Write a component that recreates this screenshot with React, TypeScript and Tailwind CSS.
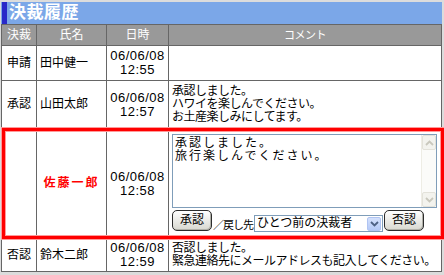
import React from 'react';

const FONT = "font-['Liberation_Sans','Noto_Sans_CJK_JP',sans-serif]";

type Row = {
  status: string;
  name: string;
  date: string;
  time: string;
  comment: string[];
  h: string;
};

const rows: Row[] = [
  { status: '申請', name: '田中健一', date: '06/06/08', time: '12:55', comment: [], h: 'h-[35px]' },
  {
    status: '承認',
    name: '山田太郎',
    date: '06/06/08',
    time: '12:57',
    comment: ['承認しました。', 'ハワイを楽しんでください。', 'お土産楽しみにしてます。'],
    h: 'h-[48px]',
  },
];

const GRID = 'grid grid-cols-[35px_70px_62px_273px] border-l border-[#666]';
const CELL = 'border-r border-b border-[#666] flex items-center';

function DateCell({ date, time }: { date: string; time: string }) {
  return (
    <div className={`${CELL} flex-col justify-center text-[13px] leading-[14px] tracking-[0.5px] text-center`}>
      <span>{date}</span>
      <span>{time}</span>
    </div>
  );
}

function Chevron({ color, up }: { color: string; up?: boolean }) {
  return (
    <svg width="9" height="6" viewBox="0 0 9 6">
      <path d={up ? 'M1 5 L4.5 1.5 L8 5' : 'M1 1 L4.5 4.5 L8 1'} fill="none" stroke={color} strokeWidth="1.8" />
    </svg>
  );
}

function XpButton({ label }: { label: string }) {
  return (
    <div className="h-[21px] w-[40px] rounded-[5px] border border-[#2c2c2c] bg-gradient-to-b from-white to-[#d8d8d0] shadow-[inset_-1px_-1px_0_#b0b0a8] flex items-center justify-center text-[12px]">
      {label}
    </div>
  );
}

export default function App() {
  return (
    <div className={`w-[444px] h-[275px] bg-[#dcdcdc] pt-[2px] pl-[1px] text-black ${FONT}`}>
      <div className="w-[441px]">
        {/* Title */}
        <div className="h-[22px] bg-[#7ba7e8] flex items-stretch">
          <div className="w-[5px] ml-px bg-[#2828c8]" />
          <span className="ml-[2px] text-white font-bold text-[17px] leading-[22px] tracking-[0.5px]">決裁履歴</span>
        </div>

        {/* Header */}
        <div className={`${GRID} border-t bg-[#999] text-white text-[12px] h-[22px]`}>
          <div className={`${CELL} justify-center`}>決裁</div>
          <div className={`${CELL} justify-center`}>氏名</div>
          <div className={`${CELL} justify-center`}>日時</div>
          <div className={`${CELL} justify-center text-[11px] tracking-[-0.5px]`}>コメント</div>
        </div>

        <div className="bg-white text-[12px] leading-[13px]">
          {rows.map((r) => (
            <div key={r.name} className={`${GRID} ${r.h}`}>
              <div className={`${CELL} justify-center`}>{r.status}</div>
              <div className={`${CELL} pl-[3px]`}>{r.name}</div>
              <DateCell date={r.date} time={r.time} />
              <div className={`${CELL} pl-[3px]`}>
                <div className="flex flex-col tracking-[-0.5px]">
                  {r.comment.map((c) => (
                    <span key={c}>{c}</span>
                  ))}
                </div>
              </div>
            </div>
          ))}

          {/* Current approver row */}
          <div className={`${GRID} h-[110px] relative`}>
            <div className={CELL} />
            <div className={`${CELL} justify-center text-[#ff0000] font-bold tracking-[2px]`}>佐藤一郎</div>
            <DateCell date="06/06/08" time="12:58" />
            <div className="border-r border-b border-[#666] flex flex-col pl-[3px] pt-[5px]">
              <div className="w-[265px] h-[74px] border border-[#7f9db9] bg-white flex">
                <div className="flex-1 pl-[2px] pt-[2px] text-[12px] leading-[13px] tracking-[2px]">
                  <div>承認しました。</div>
                  <div>旅行楽しんでください。</div>
                </div>
                <div className="w-[15px] flex flex-col bg-[#fbfbf9] border-l border-[#eeede5]">
                  <div className="h-[15px] border border-[#e3e2da] rounded-[2px] bg-[#f3f3ee] flex items-center justify-center">
                    <Chevron color="#c9c8bd" up />
                  </div>
                  <div className="flex-1" />
                  <div className="h-[15px] border border-[#e3e2da] rounded-[2px] bg-[#f3f3ee] flex items-center justify-center">
                    <Chevron color="#c9c8bd" />
                  </div>
                </div>
              </div>
              <div className="mt-[2px] flex items-end">
                <XpButton label="承認" />
                <span className="ml-px text-[11px] tracking-[-1px] leading-[14px] mb-[-1px]">／戻し先</span>
                <div className="ml-px mb-[-1px] h-[17px] w-[129px] border border-[#7f9db9] bg-white flex items-center">
                  <span className="flex-1 pl-[2px] text-[12px]">ひとつ前の決裁者</span>
                  <div className="w-[14px] h-[14px] mr-px rounded-[2px] bg-gradient-to-b from-[#d4e1fd] to-[#b4c9f7] border border-[#b0c4f2] flex items-center justify-center">
                    <Chevron color="#4d6185" />
                  </div>
                </div>
                <div className="ml-px">
                  <XpButton label="否認" />
                </div>
              </div>
            </div>
            <div className="absolute left-0 top-[-1px] right-[-2px] bottom-0 border-[3px] border-[#ff0000] shadow-[0_0_0_1px_#ff9a9a,inset_0_0_0_1px_#ff9a9a] pointer-events-none" />
          </div>

          <div className={`${GRID} h-[33px]`}>
            <div className={`${CELL} justify-center`}>否認</div>
            <div className={`${CELL} pl-[3px]`}>鈴木二郎</div>
            <DateCell date="06/06/08" time="12:59" />
            <div className={`${CELL} pl-[3px]`}>
              <div className="flex flex-col tracking-[-0.5px] whitespace-nowrap">
                <span>否認しました。</span>
                <span>緊急連絡先にメールアドレスも記入してください。</span>
              </div>
            </div>
          </div>
        </div>
      </div>
    </div>
  );
}
